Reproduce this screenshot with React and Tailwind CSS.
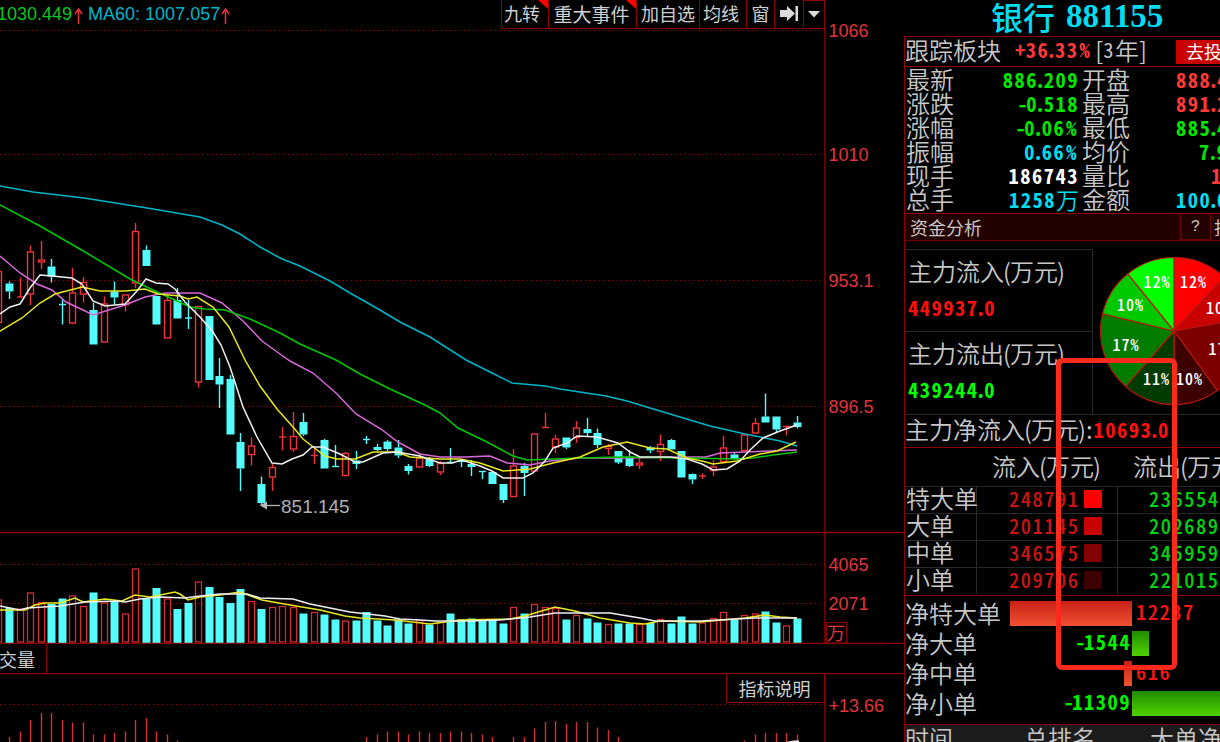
import React from "react";

const RED = "#f0323c";
const CYAN = "#54fcfc";
const LINE = "#8c0000";

// [kind, high, body top, body bottom, low], one per trading day
const candles = [
  ["r", 271, 271, 323, 323],
  ["c", 281.5, 283.5, 291.5, 299],
  ["r", 277.5, 297, 297, 297],
  ["r", 245.5, 251.5, 294.5, 305],
  ["r", 241, 259.5, 262.5, 269],
  ["c", 259, 266.5, 276.5, 282.5],
  ["c", 299, 304.5, 304.5, 324.5],
  ["r", 268, 292.5, 323.5, 324.5],
  ["r", 277, 282, 294.5, 302.5],
  ["c", 302.5, 310, 344.5, 344.5],
  ["r", 296.5, 303.5, 342.5, 342.5],
  ["c", 281.5, 291.5, 297.5, 304.5],
  ["r", 294.5, 294.5, 305, 311.5],
  ["r", 223, 231, 283.5, 288],
  ["c", 245.5, 250, 266, 266],
  ["c", 296, 296, 324.5, 324.5],
  ["r", 294, 300, 338.5, 338.5],
  ["c", 288, 300, 318.5, 318.5],
  ["c", 300, 318, 318, 329],
  ["r", 306, 306, 382.5, 387.5],
  ["c", 316, 316, 380, 380],
  ["c", 358, 376, 384.5, 408],
  ["c", 375, 379, 434.5, 434.5],
  ["c", 433, 442, 468.5, 491],
  ["r", 437.5, 445.5, 455, 465.5],
  ["c", 476.5, 484, 503, 506],
  ["r", 464, 467, 477.5, 491],
  ["r", 427, 437, 437, 450.5],
  ["r", 412, 436, 449.5, 452],
  ["c", 413, 422, 434.5, 436],
  ["r", 448, 455.5, 455.5, 464],
  ["c", 439, 440, 468.5, 468.5],
  ["c", 445, 466.5, 466.5, 466.5],
  ["r", 452, 453, 476, 476],
  ["c", 451, 460.5, 464, 469],
  ["c", 436, 439.5, 439.5, 444],
  ["c", 444, 447, 450, 451],
  ["c", 440, 441.5, 449, 451],
  ["c", 440, 447.5, 455.5, 458],
  ["c", 464, 466, 471, 474.5],
  ["r", 453, 457.5, 467.5, 467.5],
  ["c", 457, 459, 466, 467],
  ["r", 461, 463, 472.5, 475],
  ["c", 448, 462.5, 462.5, 462.5],
  ["c", 459, 460, 462, 467],
  ["c", 460, 464, 467, 476],
  ["c", 471.5, 471.5, 471.5, 479],
  ["c", 472, 472, 484, 484],
  ["c", 484, 484, 500, 503],
  ["r", 449, 465.5, 497, 497],
  ["c", 463, 466, 473, 496],
  ["r", 433.5, 433.5, 471.5, 471.5],
  ["r", 413, 427.5, 427.5, 427.5],
  ["r", 435, 438.5, 447.5, 453],
  ["c", 437.5, 437.5, 447.5, 449],
  ["r", 421, 427.5, 438, 443],
  ["c", 418, 429, 433, 437],
  ["c", 428.5, 433, 445, 448],
  ["r", 444, 446, 449, 455],
  ["c", 451, 451, 462.5, 464],
  ["c", 450, 456.5, 466, 467],
  ["r", 458, 462.5, 465.5, 469],
  ["c", 446, 447.5, 450.5, 453],
  ["r", 434.5, 444, 452, 461],
  ["c", 439, 440, 449.5, 449.5],
  ["c", 451, 451, 477.5, 477.5],
  ["c", 473.5, 474, 479.5, 484],
  ["r", 473.5, 476, 476, 479],
  ["r", 460, 466.5, 471, 476],
  ["r", 436, 447.5, 462, 462],
  ["c", 452, 454.5, 459, 459],
  ["r", 434.5, 434.5, 451, 451],
  ["r", 418, 423, 433.5, 433.5],
  ["c", 393.5, 416.5, 422.5, 422.5],
  ["c", 416.5, 416.5, 429.5, 432],
  ["r", 426.5, 426.5, 426.5, 435.5],
  ["c", 416, 422.5, 427, 428.5],
];

const volumes = [
  43, 35, 34, 50, 40.5, 39, 44.5, 47, 36.5, 50.5, 40, 42, 29, 74, 44, 55, 44,
  34, 40, 61, 56, 46, 40, 54, 41.5, 34, 35.5, 36.5, 35.5, 29.5, 30.5, 28.5, 23.5,
  22, 22.5, 31, 22.5, 17.5, 23.5, 19.5, 22.5, 18.5, 20.5, 29.5, 23.5, 24.5, 22.5,
  24, 19.5, 35.5, 29.5, 38.5, 35.5, 34.5, 23.5, 27.5, 24.5, 20.5, 18.5, 19.5,
  19.5, 18.5, 20, 23.5, 19.5, 26.5, 19.5, 20, 24.5, 30.5, 23, 27.5, 29, 31.5,
  20.5, 17, 24.5,
];

// day index -> top of the histogram bar
const histogram = [
  [0, 737], [1, 731.5], [2, 720], [3, 713], [4, 713], [5, 720], [6, 722.5],
  [7, 722.5], [8, 734.5], [9, 734.5], [10, 733], [11, 731.5], [12, 720],
  [13, 718], [14, 731.5], [15, 734.5], [16, 740.5], [34, 737], [35, 734.5],
  [36, 731.5], [37, 731.5], [38, 734.5], [39, 731.5], [40, 733], [41, 733],
  [42, 731.5], [43, 731.5], [44, 733], [45, 734.5], [46, 737], [48, 737],
  [49, 737], [50, 728.5], [51, 722], [52, 721], [53, 724], [54, 722], [55, 722],
  [56, 727.5], [57, 730], [58, 737], [70, 740.5], [71, 734.5], [72, 733],
  [73, 733], [74, 733], [75, 734.5],
];

const averages = [
  {
    color: "#00b4c8",
    points:
      "0,186 33,192 84,198 147,208 200,217 222,225 240,234 260,247 280,258 300,266 330,281 350,293 380,310 400,322 430,337 466,360 490,372 512,383 545,386 560,389 606,396 627,401 650,408 690,420 710,426 745,434 765,438 780,441 797,446",
  },
  {
    color: "#d868d8",
    points:
      "0,256 20,273 37,284 52,290 66,302 83,310 93,315 125,305 145,297 165,293 200,293 222,303 243,321 262,341 280,354 290,361 313,373 336,393 356,414 381,429 398,442 420,454 440,457 465,457 490,456 507,463 530,465 550,461 580,458 620,458 690,457 706,457 720,453 797,450",
  },
  {
    color: "#00c800",
    points:
      "0,205 40,226 85,252 130,279 155,291 190,307 205,309 225,310 250,319 280,333 300,344 336,360 360,374 390,389 425,405 440,413 458,428 487,442 513,456 527,460 553,459 580,458 620,457 687,458 737,459 753,458 773,455 797,452",
  },
  {
    color: "#e8e820",
    points:
      "0,331 22,318 40,303 55,294 82,287 100,291 125,291 145,289 158,294 180,296 188,299 197,297 213,307 229,327 245,360 260,386 277,409 293,427 303,439 312,446 325,456 337,459 355,459 373,452 397,452 410,457 440,459 460,459 480,463 503,471 530,469 553,463 580,457 603,447 627,442 650,448 667,449 687,458 702,461 713,464 737,461 760,454 777,451 796,442",
  },
  {
    color: "#f0f0f0",
    points:
      "0,314 10,307 20,304 30,288 40,275 52,276 72,278 82,284 93,301 105,306 125,304 137,291 146,279 156,283 168,284 175,289 185,302 200,317 213,332 221,345 230,367 243,407 257,437 272,463 282,464 292,459 303,455 312,447 323,447 340,454 355,462 363,462 383,453 397,452 420,456 440,463 452,463 462,460 480,466 492,471 503,478 523,478 533,473 545,461 553,448 567,443 577,436 597,437 618,443 630,452 640,457 670,457 687,459 702,464 713,470 727,469 740,461 750,450 763,438 780,431 797,425",
  },
];

const volumeAverages = [
  {
    color: "#e8e820",
    points:
      "0,610 25,610 35,605 45,603 60,603 75,598 83,602 105,599 122,601 135,595 150,597 175,592 180,594 188,600 200,597 220,595 240,592 262,600 290,605 320,610 345,616 360,618 395,620 430,624 460,620 510,619 525,616 545,610 555,607 575,611 600,618 630,623 645,624 660,621 700,622 745,618 765,615 780,617 797,618",
  },
  {
    color: "#f0f0f0",
    points:
      "0,606 20,610 27,608 60,606 85,602 117,601 125,602 140,599 160,597 185,598 200,596 220,594 247,594 260,598 293,599 310,604 350,612 385,616 400,619 420,620 435,621 470,621 500,620 530,617 555,613 610,613 640,618 655,621 700,621 755,618 797,618",
  },
];

const dayX = (i) => Math.round(9 + 10.503 * (i - 1));

const GridLine = ({ y }) => (
  <line x1="0" x2="825" y1={y} y2={y} stroke="#8c0000" strokeDasharray="1.5 3" />
);

const AxisLabel = ({ y, children }) => (
  <text x="828.5" y={y} fill="#e0343a" fontSize="18">
    {children}
  </text>
);

const Candle = ({ x, data }) => {
  const [kind, high, top, bottom, low] = data;
  const color = kind === "r" ? RED : CYAN;
  if (top === bottom) {
    return (
      <g stroke={color} strokeWidth="1.4">
        <line x1={x} x2={x} y1={high} y2={low} />
        <line x1={x - 3.5} x2={x + 3.5} y1={top} y2={top} />
      </g>
    );
  }
  return (
    <g stroke={color} strokeWidth="1.4">
      <line x1={x} x2={x} y1={high} y2={top} />
      <line x1={x} x2={x} y1={bottom} y2={low} />
      {kind === "r" ? (
        <rect x={x - 3} y={top + 0.5} width="6" height={bottom - top - 1} fill="none" />
      ) : (
        <rect x={x - 4} y={top} width="8" height={bottom - top} fill={color} stroke="none" />
      )}
    </g>
  );
};

const PriceChart = () => (
  <svg width="904" height="503" viewBox="0 30 904 503" className="block overflow-visible">
    {[30.5, 154.5, 280.5, 406.5].map((y) => (
      <GridLine key={y} y={y} />
    ))}
    <line x1="825" x2="825" y1="28" y2="533" stroke={LINE} strokeWidth="1.5" />
    <line x1="0" x2="904" y1="532.5" y2="532.5" stroke={LINE} strokeWidth="1.5" />
    {candles.map((c, i) => (
      <Candle key={i} x={dayX(i) + 0.5} data={c} />
    ))}
    {averages.map((a) => (
      <polyline key={a.color} points={a.points} fill="none" stroke={a.color} strokeWidth="1.5" />
    ))}
    <path d="M260 505.5l7-4v8z" fill="#b8b8b8" />
    <line x1="264" x2="280" y1="505.5" y2="505.5" stroke="#b8b8b8" strokeWidth="1.3" />
    <text x="281" y="512.5" fill="#b0b0b0" fontSize="19">
      851.145
    </text>
    <AxisLabel y="37">1066</AxisLabel>
    <AxisLabel y="161">1010</AxisLabel>
    <AxisLabel y="287">953.1</AxisLabel>
    <AxisLabel y="413">896.5</AxisLabel>
  </svg>
);

const VolumeChart = () => (
  <svg width="904" height="111" viewBox="0 533 904 111" className="block">
    <GridLine y={564.5} />
    <GridLine y={603.5} />
    {volumes.map((v, i) =>
      candles[i][0] === "r" ? (
        <rect
          key={i}
          x={dayX(i) - 2.5}
          y={643 - v}
          width="6"
          height={v - 1}
          fill="none"
          stroke="#d42c36"
          strokeWidth="1.3"
        />
      ) : (
        <rect key={i} x={dayX(i) - 3.5} y={643 - v} width="8" height={v} fill={CYAN} />
      )
    )}
    {volumeAverages.map((a) => (
      <polyline key={a.color} points={a.points} fill="none" stroke={a.color} strokeWidth="1.6" />
    ))}
    <line x1="825" x2="825" y1="533" y2="644" stroke={LINE} strokeWidth="1.5" />
    <line x1="0" x2="904" y1="643.5" y2="643.5" stroke={LINE} strokeWidth="1.3" />
    <AxisLabel y="571">4065</AxisLabel>
    <AxisLabel y="610">2071</AxisLabel>
    <rect x="826.5" y="622.5" width="20" height="20.5" fill="none" stroke={LINE} />
    <text x="827" y="640" fill="#e0343a" fontSize="18">
      万
    </text>
  </svg>
);

const IndicatorChart = () => (
  <svg width="904" height="69" viewBox="0 673 904 69" className="block">
    <line x1="0" x2="904" y1="673.6" y2="673.6" stroke={LINE} strokeWidth="1.3" />
    <GridLine y={704.5} />
    {histogram.map(([i, top]) => (
      <line
        key={i}
        x1={dayX(i + 1) + 0.5}
        x2={dayX(i + 1) + 0.5}
        y1={top}
        y2="742"
        stroke="#d43038"
        strokeWidth="1.4"
      />
    ))}
    <path d="M786 742l8-1.5h5v1.5z" fill="#f0f0f0" />
    <line x1="825" x2="825" y1="673" y2="742" stroke={LINE} strokeWidth="1.5" />
    <AxisLabel y="711.5">+13.66</AxisLabel>
  </svg>
);

const UpArrow = () => (
  <svg width="9" height="16" viewBox="0 0 9 16" fill="none" stroke="#e8303a" strokeWidth="1.5">
    <path d="M4.5 16V1M1 6l3.5-5L8 6" />
  </svg>
);

const ToolButton = ({ className, hot, children }) => (
  <div className={`relative flex items-center justify-center border-l border-b border-[#8c0000] ${className}`}>
    {children}
    {hot && (
      <svg className="absolute top-0 right-0" width="10" height="9" viewBox="0 0 10 9">
        <path d="M0 0h10v9z" fill="#ff0000" />
      </svg>
    )}
  </div>
);

const TopBar = () => (
  <div className="flex h-[30px] w-[904px]">
    <div className="flex h-[29px] w-[501px] items-center pb-px text-[18px] leading-none">
      <span className="-ml-[3px] text-[#00c81e]">1030.449</span>
      <span className="mt-1 ml-0.5">
        <UpArrow />
      </span>
      <span className="ml-[5px] text-[#00b4c8]">MA60: 1007.057</span>
      <span className="mt-1 ml-px">
        <UpArrow />
      </span>
    </div>
    <div className="flex h-[29px] text-[18px] leading-none text-[#d0d0d0]">
      <ToolButton className="w-[47px] pt-0.5 pr-1.5" hot>九转</ToolButton>
      <ToolButton className="w-[88px] pt-0.5 pr-0.5 text-[19px]" hot>重大事件</ToolButton>
      <ToolButton className="w-[63px] pt-0.5">加自选</ToolButton>
      <ToolButton className="w-[47px] pt-0.5 pr-1">均线</ToolButton>
      <ToolButton className="w-[28px] pt-0.5">窗</ToolButton>
      <ToolButton className="w-[29px]">
        <svg width="19" height="18" viewBox="0 0 19 18" fill="#dcdcdc">
          <path d="M0 5h7V1l8 7.500L7 16v-4H0zM15.500 1H18v15h-2.500z" />
        </svg>
      </ToolButton>
      <ToolButton className="w-[22px] border-t border-r">
        <svg width="12" height="7" viewBox="0 0 12 7" fill="#dcdcdc">
          <path d="M0 0h12L6 6.500z" />
        </svg>
      </ToolButton>
    </div>
  </div>
);

const squeeze = { ".": "-mx-[3px]", "-": "-mr-[3px]", "%": "mx-px", "+": "-mr-px" };

// half-width digits on a fixed pitch, with narrower punctuation
const Num = ({ weight = "font-bold", className = "", children }) => (
  <span className={`text-[20.5px] leading-none tracking-[1.5px] whitespace-nowrap [font-feature-settings:'hwid'] ${weight} ${className}`}>
    {children.split(/([.%+-])/).map((part, i) =>
      squeeze[part] ? (
        <span key={i} className={squeeze[part]}>
          {part}
        </span>
      ) : (
        part
      )
    )}
  </span>
);

const Unit = () => (
  <>
    <span className="-mx-px">(</span>万元<span className="-ml-px">)</span>
  </>
);

const quotes = [
  ["最新", "886.209", "text-[#00e600]", "开盘", "888.4", "ml-[46px] text-[#ff3838]"],
  ["涨跌", "-0.518", "text-[#00e600]", "最高", "891.2", "ml-[46px] text-[#ff3838]"],
  ["涨幅", "-0.06%", "text-[#00e600]", "最低", "885.4", "ml-[46px] text-[#00e600]"],
  ["振幅", "0.66%", "text-[#00dcf0]", "均价", "7.9", "ml-[69px] text-[#00e600]"],
  ["现手", "186743", "text-white", "量比", "1", "ml-[81px] text-[#ff3838]"],
  ["总手", "1258", "text-[#00dcf0]", "金额", "100.0", "ml-[46px] text-[#00dcf0]"],
];

const slices = [
  [0, 43, "#ff0000"],
  [43, 80, "#c80000"],
  [80, 144, "#7d0000"],
  [144, 180, "#3c0000"],
  [180, 221, "#003c00"],
  [221, 283.5, "#007d00"],
  [283.5, 321, "#00c800"],
  [321, 360, "#00ff00"],
];

const sliceLabels = [
  ["12%", 1143.5, 287],
  ["12%", 1180, 287],
  ["10%", 1206, 312.5],
  ["10%", 1117, 309.5],
  ["17%", 1112.5, 350],
  ["17%", 1208.5, 354],
  ["11%", 1143, 383.5],
  ["10%", 1176, 383.5],
];

const rim = (deg) => {
  const a = (deg * Math.PI) / 180;
  return `${1174 + 73.5 * Math.sin(a)} ${330 - 73.5 * Math.cos(a)}`;
};

const FlowPie = () => (
  <svg width="127" height="174" viewBox="1093 240 127 174" className="block shrink-0">
    {slices.map(([from, to, fill]) => (
      <path
        key={from}
        d={`M1174 330L${rim(from)}A73.5 73.5 0 0 1 ${rim(to)}Z`}
        fill={fill}
        stroke="#b41810"
        strokeWidth="1.2"
      />
    ))}
    {sliceLabels.map(([label, x, y]) => (
      <text
        key={x}
        x={x}
        y={y}
        fill="#fff"
        fontSize="16"
        className="font-medium tracking-[1px] [font-feature-settings:'hwid']"
      >
        {label}
      </text>
    ))}
  </svg>
);

const orders = [
  ["特大单", "248791", "bg-[#ff0000]", "236554"],
  ["大单", "201145", "bg-[#c80000]", "202689"],
  ["中单", "346575", "bg-[#820000]", "345959"],
  ["小单", "209706", "bg-[#3c0000]", "221015"],
];

const NetRow = ({ label, value, width, up }) => {
  const bar = (
    <div
      className={`h-[25px] shrink-0 bg-linear-to-b ${
        up ? "from-[#c81e14] to-[#f05032]" : "from-[#1e8c00] to-[#50d200]"
      }`}
      style={{ width }}
    />
  );
  const num = (
    <Num
      weight={up ? "font-medium" : "font-bold"}
      className={up ? "mb-1 ml-1 text-[#ff1414]" : "mb-1 mr-px text-[#00f000]"}
    >
      {value}
    </Num>
  );
  return (
    <div className="flex h-[30px] items-center">
      <div className="w-[98px] shrink-0 pb-px whitespace-nowrap">{label}</div>
      <div className="flex w-[129px] shrink-0 items-center justify-end">{up ? bar : num}</div>
      <div className="flex items-center">{up ? num : bar}</div>
    </div>
  );
};

const SidePanel = () => (
  <div className="flex h-[742px] w-[316px] shrink-0 flex-col overflow-hidden text-[24px] leading-none font-[350] text-[#c8c8c8]">
    <div className="flex h-9 shrink-0 items-center pb-1 pl-[87px] text-[32px] font-bold whitespace-nowrap text-[#00dcf0]">
      <span className="font-medium">银行</span>
      <span className="ml-[11px] font-['Liberation_Serif',serif] text-[33px]">881155</span>
    </div>

    <div className="flex min-h-0 flex-1 flex-col border-l border-[#8c0000]">
      <div className="flex h-[30px] shrink-0 items-center border-t border-[#8c0000]">
        <span className="w-[110px] shrink-0 pb-1">跟踪板块</span>
        <Num className="mb-1 text-[#ff3838]">+36.33%</Num>
        <span className="ml-[3px] flex shrink-0 items-center pb-1">
          [<Num weight="font-normal">3</Num>年]
        </span>
        <span className="ml-auto flex h-6 w-[44px] shrink-0 items-center overflow-hidden bg-[#c80000] pb-0.5 pl-[10px] text-[18px] font-normal whitespace-nowrap text-white">
          去投
        </span>
      </div>

      <div className="flex h-[147px] shrink-0 flex-col border-t border-[#8c0000]">
        {quotes.map((q) => (
          <div key={q[0]} className="flex h-6 shrink-0 items-center">
            <span className="w-[60px] shrink-0 pl-px">{q[0]}</span>
            <span className={`flex w-[114px] shrink-0 items-center justify-end ${q[2]}`}>
              <Num>{q[1]}</Num>
              {q[0] === "总手" && <span className="text-[23px]">万</span>}
            </span>
            <span className="ml-[3px] w-12 shrink-0">{q[3]}</span>
            <Num className={q[5]}>{q[4]}</Num>
          </div>
        ))}
      </div>

      <div className="flex h-[27px] shrink-0 items-center border-t border-[#8c0000] bg-[#230000] text-[18px] font-normal">
        <span className="w-[275px] shrink-0 pl-[5px]">资金分析</span>
        <span className="flex h-full w-[31px] shrink-0 items-center justify-center border-x border-b border-[#6e0000] font-['Liberation_Mono',monospace] text-base">
          ?
        </span>
        <span className="w-[9px] overflow-hidden pl-[3px]">找</span>
      </div>

      <div className="flex h-[174px] shrink-0 border-t border-[#6e0000]">
        <div className="mt-2 flex w-[188px] shrink-0 flex-col border-r border-[#262a2a]">
          <div className="flex h-[82px] flex-col border-t border-[#262a2a] pt-[9px] pl-[3px]">
            <span className="whitespace-nowrap">主力流入<Unit /></span>
            <Num className="mt-[14px] text-[#ff0f0f]">449937.0</Num>
          </div>
          <div className="flex h-[83px] flex-col border-t border-[#262a2a] pt-[9px] pl-[3px]">
            <span className="whitespace-nowrap">主力流出<Unit /></span>
            <Num className="mt-[14px] text-[#00ff00]">439244.0</Num>
          </div>
        </div>
        <FlowPie />
      </div>

      <div className="flex h-[33px] shrink-0 items-center border-t border-[#262a2a] pb-1 whitespace-nowrap">
        <span>主力净流入<Unit /></span>
        <span className="font-normal">:</span>
        <Num className="ml-px text-[#ff0f0f]">10693.0</Num>
      </div>

      <div className="flex h-[39px] shrink-0 items-center border-t border-[#8c0000] pb-0.5 whitespace-nowrap">
        <span className="ml-[87px] w-[141px] shrink-0">流入<Unit /></span>
        <span>流出<Unit /></span>
      </div>

      {orders.map(([label, inflow, swatch, outflow]) => (
        <div key={label} className="flex h-[27px] shrink-0 items-center border-t border-[#262a2a]">
          <span className="flex h-full w-[72px] shrink-0 items-center border-r border-[#262a2a] pb-1 pl-px whitespace-nowrap">{label}</span>
          <span className="flex h-full w-[141px] shrink-0 items-center border-r border-[#262a2a] pb-0.5 pl-[32px]">
            <Num weight="font-medium" className="mb-0.5 w-[75px] shrink-0 text-[#cc1414]">{inflow}</Num>
            <span className={`h-[18px] w-[18px] shrink-0 ${swatch}`} />
          </span>
          <Num weight="font-medium" className="mb-1 ml-[31px] text-[#00d214]">{outflow}</Num>
        </div>
      ))}

      <div className="mt-px flex h-[129px] shrink-0 flex-col border-t border-[#8c0000] pt-[2px]">
        <NetRow label="净特大单" value="12237" width={122} up />
        <NetRow label="净大单" value="-1544" width={17} />
        <NetRow label="净中单" value="616" width={8} up />
        <NetRow label="净小单" value="-11309" width={88} />
      </div>

      <div className="flex min-h-0 flex-1 overflow-hidden border-t border-[#8c0000] bg-[#1c1c1c] pt-px whitespace-nowrap">
        <span className="w-[119px] shrink-0">时间</span>
        <span className="w-[126px] shrink-0">总排名</span>
        <span>大单净</span>
      </div>
    </div>
  </div>
);

export default function App() {
  return (
    <div className="relative flex h-[742px] w-[1220px] overflow-hidden bg-black font-['Liberation_Sans','Noto_Sans_CJK_SC',sans-serif]">
      <div className="flex w-[904px] shrink-0 flex-col">
        <TopBar />
        <PriceChart />
        <VolumeChart />
        <div className="flex h-[29px] shrink-0">
          <div className="flex w-[47px] items-center justify-end border-r border-[#8c0000] pt-1 pr-[11px] text-[18px] leading-none whitespace-nowrap text-[#d0d0d0]">
            交量
          </div>
        </div>
        <div className="relative">
          <IndicatorChart />
          <div className="absolute top-0 left-[726px] flex h-[30px] w-[99px] items-center justify-center border border-[#8c0000] bg-black pt-1 pr-0.5 text-[18px] leading-none text-[#d0d0d0]">
            指标说明
          </div>
        </div>
      </div>
      <div className="flex font-['Noto_Sans_CJK_SC',sans-serif]">
        <SidePanel />
      </div>
      <div className="absolute top-[358px] left-[1056px] h-[312px] w-[121px] rounded-md border-5 border-[#ff2a1c]" />
    </div>
  );
}
